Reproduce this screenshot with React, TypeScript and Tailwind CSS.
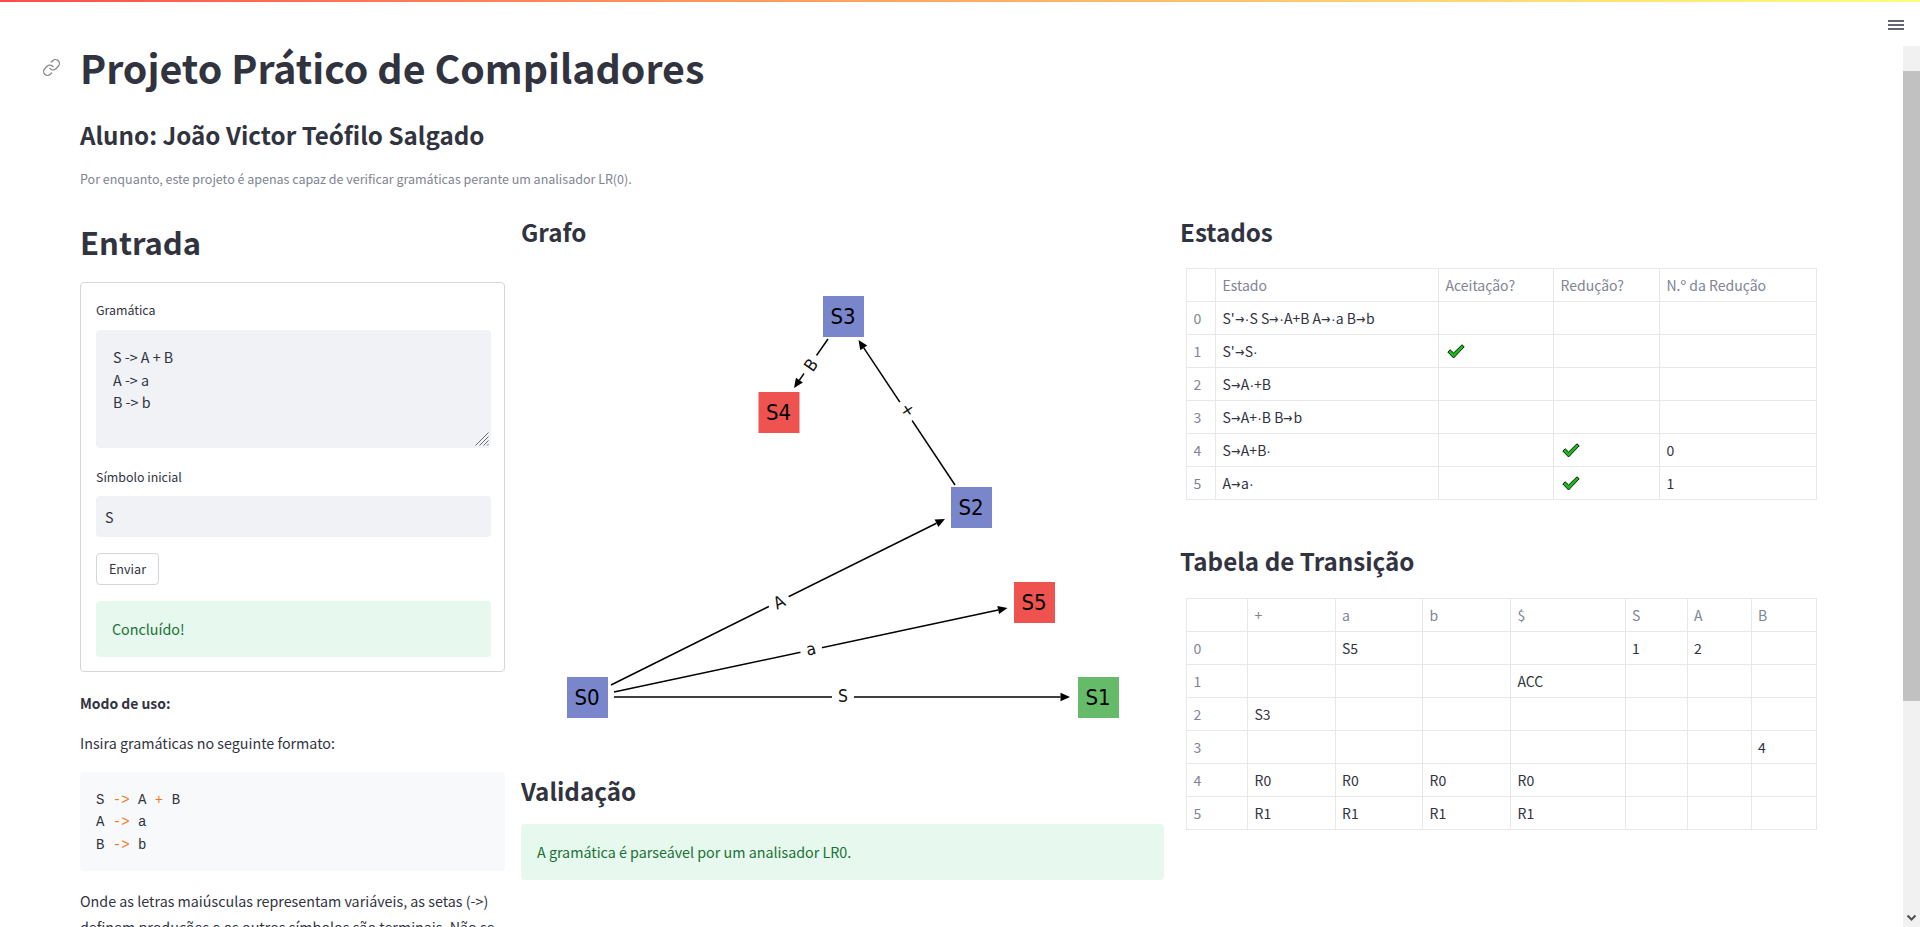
import React from "react";
import { Link } from "lucide-react";

const border = "border border-[#e8e8ea]";

function Arrow({ x1, y1, x2, y2 }: { x1: number; y1: number; x2: number; y2: number }) {
  const a = Math.atan2(y2 - y1, x2 - x1);
  const len = 9.5;
  const w = 4.2;
  const bx = x2 - Math.cos(a) * len;
  const by = y2 - Math.sin(a) * len;
  const px = -Math.sin(a) * w;
  const py = Math.cos(a) * w;
  return (
    <g>
      <line x1={x1} y1={y1} x2={bx} y2={by} stroke="#000" strokeWidth="1.5" />
      <polygon points={`${x2},${y2} ${bx + px},${by + py} ${bx - px},${by - py}`} fill="#000" />
    </g>
  );
}

function EdgeLabel({ x, y, t, r, w = 22, h = 20 }: { x: number; y: number; t: string; r: number; w?: number; h?: number }) {
  return (
    <g transform={`translate(${x} ${y}) rotate(${r})`}>
      <rect x={-w / 2} y={-h / 2} width={w} height={h} fill="#fff" />
      <text transform="translate(0 6) scale(0.92 1)" textAnchor="middle" fontFamily="'DejaVu Sans', sans-serif" fontSize="17" fill="#111">
        {t}
      </text>
    </g>
  );
}

function Node({ x, y, t, c }: { x: number; y: number; t: string; c: string }) {
  return (
    <g>
      <rect x={x} y={y} width="41" height="41" fill={c} />
      <text transform={`translate(${x + 20} ${y + 27.5}) scale(0.92 1)`} textAnchor="middle" fontFamily="'DejaVu Sans', sans-serif" fontSize="21.5" fill="#000">
        {t}
      </text>
    </g>
  );
}

function Graph() {
  return (
    <svg viewBox="521 250 643 520" className="mt-px block h-[520px] w-[643px]">
      <Arrow x1={614} y1={697} x2={1070} y2={697} />
      <Arrow x1={614} y1={692} x2={1007.5} y2={608} />
      <Arrow x1={611} y1={685} x2={945} y2={519} />
      <Arrow x1={955} y1={485} x2={858.5} y2={340} />
      <Arrow x1={828} y1={339} x2={794} y2={388} />
      <EdgeLabel x={843} y={696} t="S" r={0} />
      <EdgeLabel x={811} y={649} t="a" r={-12} />
      <EdgeLabel x={779} y={602} t="A" r={-26.4} />
      <EdgeLabel x={908} y={410} t="+" r={56.4} />
      <EdgeLabel x={811} y={365} t="B" r={-55} />
      <Node x={823} y={296} t="S3" c="#7986cb" />
      <Node x={758.5} y={392} t="S4" c="#ef5350" />
      <Node x={951} y={487} t="S2" c="#7986cb" />
      <Node x={1014} y={582} t="S5" c="#ef5350" />
      <Node x={567} y={677} t="S0" c="#7986cb" />
      <Node x={1078} y={677} t="S1" c="#66bb6a" />
    </svg>
  );
}

function Check() {
  return (
    <svg viewBox="0 0 18 15" className="ml-px block h-[15px] w-[18px]">
      <path d="M0.8 8 L3.2 5.8 L6.6 9 L15 0.8 L17.2 2.8 L6.6 14 Z" fill="#1cb81c" stroke="#062006" strokeWidth="1" strokeLinejoin="round" />
    </svg>
  );
}

function Sym({ s }: { s: string }) {
  const parts = s.split(/(→|·)/);
  return (
    <>
      {parts.map((p, i) =>
        p === "→" ? (
          <span key={i} className="inline-block w-[10px] origin-left scale-x-[0.8] [font-family:'DejaVu_Sans',sans-serif]">
            →
          </span>
        ) : p === "·" ? (
          <span key={i} className="[font-family:'Liberation_Sans',sans-serif]">
            ·
          </span>
        ) : (
          <span key={i}>{p}</span>
        )
      )}
    </>
  );
}

const th = `${border} h-[33px] px-[6.5px] py-0 text-left align-middle font-normal text-[#808495]`;
const td = `${border} h-[33px] px-[6.5px] py-0 text-left align-middle font-normal text-[#31333f]`;

function EstadosTable() {
  const rows: [string, string, boolean, boolean, string][] = [
    ["0", "S'→·S S→·A+B A→·a B→b", false, false, ""],
    ["1", "S'→S·", true, false, ""],
    ["2", "S→A·+B", false, false, ""],
    ["3", "S→A+·B B→b", false, false, ""],
    ["4", "S→A+B·", false, true, "0"],
    ["5", "A→a·", false, true, "1"],
  ];
  return (
    <table className="ml-[6px] w-[630px] table-fixed border-collapse text-[14px] leading-[20px]">
      <colgroup>
        <col className="w-[29px]" />
        <col className="w-[223px]" />
        <col className="w-[115px]" />
        <col className="w-[106px]" />
        <col className="w-[157px]" />
      </colgroup>
      <thead>
        <tr>
          <th className={th}></th>
          <th className={th}>Estado</th>
          <th className={th}>Aceitação?</th>
          <th className={th}>Redução?</th>
          <th className={th}>N.º da Redução</th>
        </tr>
      </thead>
      <tbody>
        {rows.map((r) => (
          <tr key={r[0]}>
            <td className={th}>{r[0]}</td>
            <td className={td}>
              <Sym s={r[1]} />
            </td>
            <td className={td}>{r[2] ? <Check /> : null}</td>
            <td className={td}>{r[3] ? <Check /> : null}</td>
            <td className={td}>{r[4]}</td>
          </tr>
        ))}
      </tbody>
    </table>
  );
}

function TransitionTable() {
  const head = ["", "+", "a", "b", "$", "S", "A", "B"];
  const rows = [
    ["0", "", "S5", "", "", "1", "2", ""],
    ["1", "", "", "", "ACC", "", "", ""],
    ["2", "S3", "", "", "", "", "", ""],
    ["3", "", "", "", "", "", "", "4"],
    ["4", "R0", "R0", "R0", "R0", "", "", ""],
    ["5", "R1", "R1", "R1", "R1", "", "", ""],
  ];
  return (
    <table className="ml-[6px] w-[630px] table-fixed border-collapse text-[14px] leading-[20px]">
      <colgroup>
        <col className="w-[61px]" />
        <col className="w-[87.5px]" />
        <col className="w-[87.5px]" />
        <col className="w-[88px]" />
        <col className="w-[114.5px]" />
        <col className="w-[62px]" />
        <col className="w-[64px]" />
        <col className="w-[65.5px]" />
      </colgroup>
      <thead>
        <tr>
          {head.map((h, i) => (
            <th key={i} className={th}>
              {h}
            </th>
          ))}
        </tr>
      </thead>
      <tbody>
        {rows.map((r) => (
          <tr key={r[0]}>
            {r.map((c, i) => (
              <td key={i} className={i === 0 ? th : td}>
                {c}
              </td>
            ))}
          </tr>
        ))}
      </tbody>
    </table>
  );
}

const op = "text-[#f5781f]";
const h2 = "text-[24.2px] font-semibold leading-[34px]";

export default function App() {
  return (
    <div className="relative h-[927px] w-full overflow-hidden bg-white text-[#31333f] [font-family:'Noto_Sans_CJK_SC',sans-serif]">
      <div className="h-[2px] w-full bg-gradient-to-r from-[#ff4b4b] to-[#fffd80]" />

      <main className="pl-[80px]">
        <div className="relative">
          <h1 className="mt-[38px] text-[39.3px] font-bold leading-[53px]">Projeto Prático de Compiladores</h1>
          <Link className="absolute left-[-38px] top-[18px] h-[19px] w-[19px] text-[#8a8a8e]" strokeWidth={1.7} />
        </div>
        <h2 className={`mt-[25px] ${h2}`}>Aluno: João Victor Teófilo Salgado</h2>
        <p className="mt-[17px] text-[12.5px] leading-[20px] text-[#808495]">
          Por enquanto, este projeto é apenas capaz de verificar gramáticas perante um analisador LR(0).
        </p>

        <div className="mt-[26px] flex gap-[16px]">
          <section className="w-[425px] shrink-0 pt-[5px]">
            <h2 className="text-[31px] font-semibold leading-[44px]">Entrada</h2>
            <div className="mt-[18px] rounded-[4px] border border-[#d5d6d9] pb-[14px] pl-[15px] pr-[13px] pt-[17px]">
              <label className="block text-[12.4px] leading-[20px]">Gramática</label>
              <div className="relative mt-[10px] h-[118px]">
                <textarea
                  readOnly
                  defaultValue={"S -> A + B\nA -> a\nB -> b"}
                  className="block h-full w-full resize-none rounded-[4px] bg-[#f0f2f6] pl-[17px] pr-[16px] pt-[16px] text-[14.3px] leading-[22.5px] text-[#31333f] outline-none"
                />
                <svg viewBox="0 0 14 14" className="absolute bottom-[2px] right-[2px] h-[14px] w-[14px]">
                  <path d="M0.5 13.5 L13.5 0.5 M4.5 13.5 L13.5 4.5 M8.5 13.5 L13.5 8.5 M12 13.5 L13.5 12" stroke="#6b6b70" strokeWidth="1" fill="none" />
                </svg>
              </div>
              <label className="mt-[19px] block text-[12.4px] leading-[20px]">Símbolo inicial</label>
              <div className="mt-[9px] flex h-[41px] items-center rounded-[4px] bg-[#f0f2f6] px-[9px] text-[14.3px]">S</div>
              <button className="mt-[16px] block h-[32px] w-[63px] rounded-[4px] border border-[#d5d6d9] bg-white text-[12.6px] leading-[20px] text-[#31333f]">
                Enviar
              </button>
              <div className="mt-[16px] flex h-[56px] items-center rounded-[4px] bg-[#e7f8ee] px-[16px] text-[14.3px] text-[#177233]">
                Concluído!
              </div>
            </div>
            <p className="mt-[19px] text-[13.9px] font-semibold leading-[24px]">Modo de uso:</p>
            <p className="mt-[16px] text-[14.3px] leading-[24px]">Insira gramáticas no seguinte formato:</p>
            <pre className="mt-[17px] h-[99px] rounded-[4px] bg-[#f8f9fb] px-[16px] pt-[17px] text-[14px] leading-[22.4px] text-[#31333f] [font-family:'Liberation_Mono',monospace]">
              {"S "}
              <span className={op}>{"->"}</span>
              {" A "}
              <span className={op}>+</span>
              {" B\nA "}
              <span className={op}>{"->"}</span>
              {" a\nB "}
              <span className={op}>{"->"}</span>
              {" b"}
            </pre>
            <p className="mt-[17px] text-[14.3px] leading-[25.6px]">
              Onde as letras maiúsculas representam variáveis, as setas (-&gt;) definem produções e os outros símbolos são terminais. Não se
            </p>
          </section>

          <section className="w-[643px] shrink-0">
            <h2 className={h2}>Grafo</h2>
            <Graph />
            <h2 className={`mt-[4px] ${h2}`}>Validação</h2>
            <div className="mt-[16px] flex h-[56px] items-center rounded-[4px] bg-[#e7f8ee] px-[16px] text-[14.3px] text-[#177233]">
              A gramática é parseável por um analisador LR0.
            </div>
          </section>

          <section className="w-[640px] shrink-0">
            <h2 className={h2}>Estados</h2>
            <div className="mt-[19px]">
              <EstadosTable />
            </div>
            <h2 className={`mt-[44px] ${h2}`}>Tabela de Transição</h2>
            <div className="mt-[20px]">
              <TransitionTable />
            </div>
          </section>
        </div>
      </main>

      <svg viewBox="0 0 16 12" className="absolute left-[1888px] top-[20px] h-[12px] w-[16px]">
        <path d="M0 1h16M0 5h16M0 9h16" stroke="#31333f" strokeWidth="1.5" />
      </svg>

      <div className="absolute bottom-0 right-0 top-[46px] w-[17px] bg-[#f1f1f1]">
        <div className="absolute left-0 right-0 top-[25px] h-[630px] bg-[#c1c1c1]" />
        <svg viewBox="0 0 17 17" className="absolute bottom-0 left-0 h-[17px] w-[17px]">
          <path d="M4.5 5.5 L8.5 9.5 L12.5 5.5" fill="none" stroke="#505050" strokeWidth="2" />
        </svg>
      </div>
    </div>
  );
}
